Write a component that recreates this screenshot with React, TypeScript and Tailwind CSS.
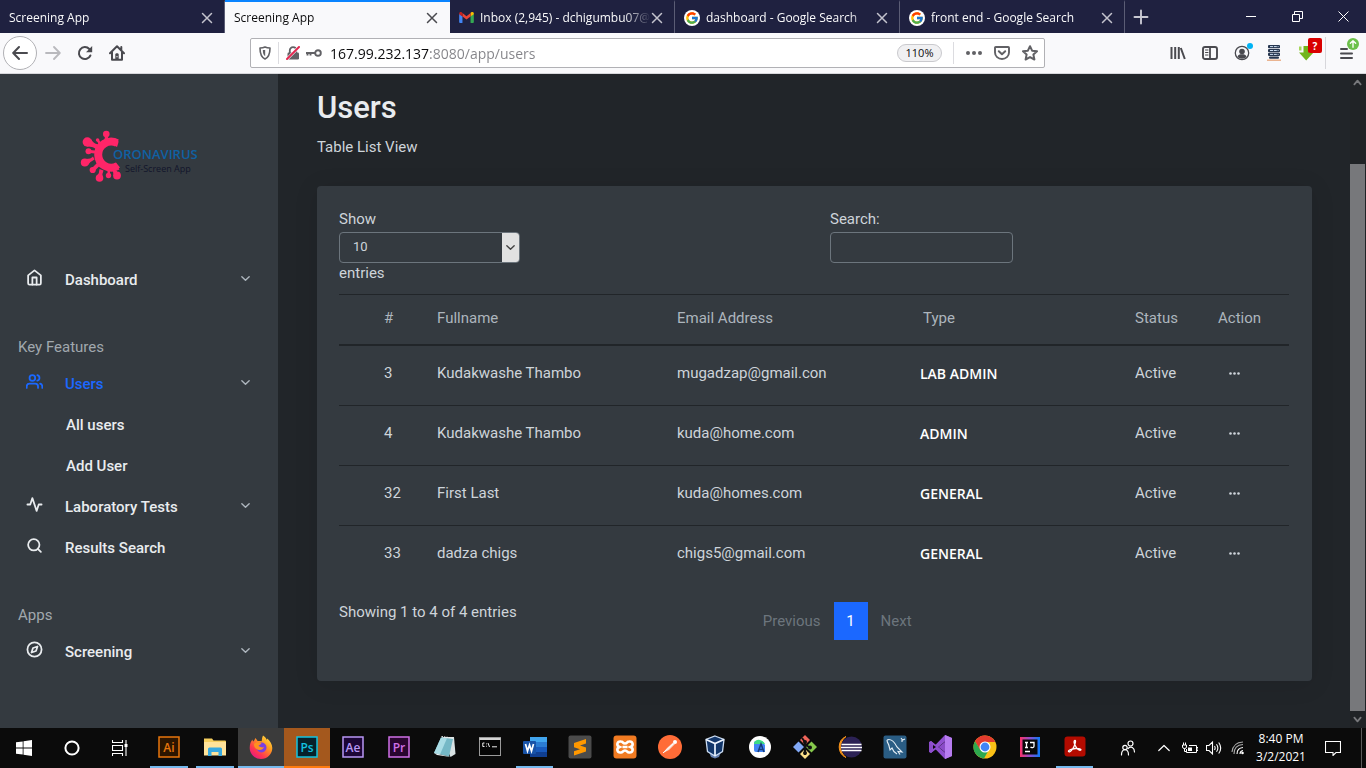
import React from "react";
import { FcGoogle } from "react-icons/fc";

type IconProps = { children: React.ReactNode; className?: string; box?: string; weight?: number };

function Stroke({ children, className = "size-4", box = "0 0 24 24", weight = 2 }: IconProps) {
  return (
    <svg viewBox={box} className={className} fill="none" stroke="currentColor" strokeWidth={weight} strokeLinecap="round" strokeLinejoin="round" aria-hidden="true">
      {children}
    </svg>
  );
}

function Art({ children, className = "size-6", box = "0 0 24 24" }: IconProps) {
  return (
    <svg viewBox={box} className={className} aria-hidden="true">
      {children}
    </svg>
  );
}

const Chevron = ({ className = "size-3" }: { className?: string }) => (
  <Stroke className={className} weight={3}>
    <path d="m4 8 8 8 8-8" />
  </Stroke>
);

/* ---------- Browser tabs ---------- */

const GmailIcon = () => (
  <Art className="h-[11px] w-[15px] shrink-0" box="0 0 16 12">
    <path d="M0 2v9a1 1 0 0 0 1 1h2.600V4.700z" fill="#4285f4" />
    <path d="M16 2v9a1 1 0 0 1-1 1h-2.600V4.700z" fill="#34a853" />
    <path d="M12.400 1.200V5L16 2.400V1.600C16 .2 14.300-.6 13 .4z" fill="#fbbc04" />
    <path d="M3.600 5V1.200L8 4.500l4.400-3.300V5L8 8.300z" fill="#ea4335" />
    <path d="M0 1.600v.8L3.600 5V1.200L3 .5C1.700-.5 0 .2 0 1.600z" fill="#c5221f" />
  </Art>
);

const GoogleBadge = () => (
  <span className="grid size-4 shrink-0 place-items-center rounded-full bg-white">
    <FcGoogle className="size-[14px]" />
  </span>
);

type TabInfo = { title: string; icon?: React.ReactNode; active?: boolean };

const tabs: TabInfo[] = [
  { title: "Screening App" },
  { title: "Screening App", active: true },
  { title: "Inbox (2,945) - dchigumbu07@", icon: <GmailIcon /> },
  { title: "dashboard - Google Search", icon: <GoogleBadge /> },
  { title: "front end - Google Search", icon: <GoogleBadge /> },
];

function Tab({ title, icon, active }: TabInfo) {
  return (
    <div
      className={
        active
          ? "flex w-[225px] items-center border-t-2 border-[#0a84ff] bg-[#f9f9fb] pr-3 pl-[9px] text-[#0c0c0d]"
          : "flex w-[225px] items-center border-t-2 border-r border-t-transparent border-r-[#5b5d75] pr-[11px] pl-[9px] text-[#f9f9fa]"
      }
    >
      <button className="flex min-w-0 flex-1 items-center gap-[6px] overflow-hidden text-left whitespace-nowrap [mask-image:linear-gradient(to_right,black_86%,transparent)]">
        {icon}
        <span>{title}</span>
      </button>
      <button aria-label={"Close " + title} className={active ? "text-[#4a4a4f]" : "text-[#c3c3cd]"}>
        <Stroke className="size-3" box="0 0 12 12">
          <path d="m1.500 1.500 9 9m0-9-9 9" strokeWidth="1.500" />
        </Stroke>
      </button>
    </div>
  );
}

function TabStrip() {
  return (
    <div className="flex h-[33px] shrink-0 bg-[#1f2140] font-['Open_Sans','Noto_Sans',sans-serif] text-[12px]">
      {tabs.map((t, i) => (
        <Tab key={i} {...t} />
      ))}
      <button aria-label="New tab" className="grid w-[32px] place-items-center text-[#c8c8d2]">
        <Stroke box="0 0 16 16" className="size-4">
          <path d="M8 1.500v13M1.500 8h13" strokeWidth="1.900" />
        </Stroke>
      </button>
      <div className="ml-auto flex text-white">
        <button aria-label="Minimize" className="grid w-[46px] place-items-center">
          <Art box="0 0 11 11" className="size-[11px]"><path d="M0 5.500h10" stroke="currentColor" /></Art>
        </button>
        <button aria-label="Restore" className="grid w-[46px] place-items-center">
          <Art box="0 0 11 11" className="size-[11px]"><path d="M.5 3.500h7v7h-7zM2.500 3V.5h8v7H8" stroke="currentColor" fill="none" /></Art>
        </button>
        <button aria-label="Close window" className="grid w-[46px] place-items-center">
          <Art box="0 0 11 11" className="size-[11px]"><path d="m.5.5 10 10m0-10-10 10" stroke="currentColor" /></Art>
        </button>
      </div>
    </div>
  );
}

/* ---------- Browser toolbar ---------- */

function Toolbar() {
  return (
    <div className="flex h-[41px] shrink-0 items-center border-b border-[#d7d7db] bg-[#f9f9fb] font-['Open_Sans','Noto_Sans',sans-serif] text-[#4a4a4f]">
      <div className="flex w-[250px] items-center pl-[3px]">
        <button aria-label="Back" className="grid size-[34px] place-items-center rounded-full border border-[#b1b1b5] bg-white">
          <Stroke box="0 0 16 16"><path d="M15 8H1.500M7 2 1.200 8 7 14" /></Stroke>
        </button>
        <button aria-label="Forward" className="grid size-8 place-items-center text-[#b9b9bd]">
          <Stroke box="0 0 16 16"><path d="M1 8h13.500M9 2l5.800 6L9 14" strokeWidth="1.800" /></Stroke>
        </button>
        <button aria-label="Reload" className="grid size-8 place-items-center">
          <Art box="0 0 16 16" className="size-4">
            <path d="M13.400 10.500A6 6 0 1 1 12.300 4" fill="none" stroke="currentColor" strokeWidth="2" strokeLinecap="round" />
            <path d="M15.200 1v6.200H9z" fill="currentColor" />
          </Art>
        </button>
        <button aria-label="Home" className="grid size-8 place-items-center">
          <Art box="0 0 16 16" className="size-4">
            <path d="M1 8.200 8 1.300l7 6.900M3 7v7.800h10V7M12.300 2v3" fill="none" stroke="currentColor" strokeWidth="2" strokeLinecap="round" strokeLinejoin="round" />
            <path d="M6.300 14V9.500c0-1.800 3.400-1.800 3.400 0V14z" fill="currentColor" />
            <path d="M8 11v1.300" stroke="#f9f9fb" strokeWidth="1" />
          </Art>
        </button>
      </div>

      <div className="flex h-[30px] min-w-0 flex-1 items-center rounded-[2px] border border-[#b1b1b5] bg-white text-[#616165]">
        <button aria-label="Tracking protection" className="grid h-[22px] w-7 place-items-center border-r border-[#dcdce0]">
          <Art box="0 0 14 14" className="size-[14px]">
            <path d="M7 1c2 1 4 1 5 1 0 5-.5 9-5 11C2.500 11 2 7 2 2c1 0 3 0 5-1z" fill="none" stroke="currentColor" strokeWidth="1.600" strokeLinejoin="round" />
            <path d="M7.200 4v6.200c-1.700-1.100-2.400-3-2.400-6.200z" fill="currentColor" />
          </Art>
        </button>
        <button aria-label="Connection not secure" className="ml-[7px]">
          <Art box="0 0 14 14" className="size-[14px]">
            <path d="M3.800 7V4.300a3.200 3.200 0 0 1 6.400 0V7" fill="none" stroke="currentColor" strokeWidth="1.800" />
            <rect x="1.500" y="6.500" width="11.500" height="7" rx="1.200" fill="currentColor" />
            <path d="M1 13 13 1" stroke="#fff" strokeWidth="3" />
            <path d="M1 13 13 1" stroke="#e22850" strokeWidth="2" strokeLinecap="round" />
          </Art>
        </button>
        <button aria-label="Saved login" className="ml-[6px]">
          <Art box="0 0 16 10" className="h-[10px] w-4">
            <circle cx="12" cy="5" r="2.800" fill="none" stroke="currentColor" strokeWidth="1.900" />
            <path d="M0 5h9M1.500 5v2.500M4.500 5v2.500" stroke="currentColor" strokeWidth="1.900" />
          </Art>
        </button>
        <input
          aria-label="Address"
          defaultValue="167.99.232.137:8080/app/users"
          className="ml-2 min-w-0 flex-1 bg-[linear-gradient(to_right,#0c0c0d_99px,#838388_99px)] bg-clip-text pt-[2px] text-[14px] leading-5 text-transparent outline-none"
        />
        <button className="h-[18px] w-[45px] rounded-full border border-[#c9c9cd] bg-[#f0f0f2] text-[11px] leading-4 text-[#0c0c0d]">110%</button>
        <span className="ml-[11px] h-[22px] w-px bg-[#dcdce0]" />
        <button aria-label="Page actions" className="ml-3 grid w-4 place-items-center">
          <Art box="0 0 16 16" className="size-4"><g fill="currentColor"><circle cx="2" cy="8" r="2" /><circle cx="8" cy="8" r="2" /><circle cx="14" cy="8" r="2" /></g></Art>
        </button>
        <button aria-label="Save to Pocket" className="ml-3">
          <Stroke box="0 0 16 16"><path d="M1.800 2h12.400q.8 0 .8.800V7.500a7 6.500 0 0 1-14 0V2.800Q1 2 1.800 2z" strokeWidth="1.900" /><path d="m4.800 6.200 3.200 3 3.200-3" /></Stroke>
        </button>
        <button aria-label="Bookmark" className="mr-[6px] ml-3">
          <Stroke box="0 0 16 16"><path d="m8 1.200 2.100 4.500 4.900.6-3.600 3.300 1 4.900L8 12.100l-4.400 2.400 1-4.900L1 6.300l4.900-.6z" /></Stroke>
        </button>
      </div>

      <div className="flex items-center self-stretch pl-[117px]">
        <button aria-label="Library" className="grid w-8 place-items-center">
          <Stroke box="0 0 16 16"><path d="M1.500 2v12M5.200 2v12M8.800 2v12M10.800 3l4 11" strokeLinecap="butt" /></Stroke>
        </button>
        <button aria-label="Sidebars" className="grid w-8 place-items-center">
          <Stroke box="0 0 16 16"><rect x="1" y="2" width="14" height="12" rx="2" strokeWidth="1.900" /><path d="M8 2v12" strokeWidth="1.800" /><path d="M3.500 5H6M3.500 7.500H6M3.500 10H6" strokeWidth="1" /></Stroke>
        </button>
        <button aria-label="Account" className="relative grid w-8 place-items-center">
          <Art box="0 0 16 16" className="size-4">
            <circle cx="8" cy="8" r="6.700" fill="none" stroke="currentColor" strokeWidth="1.300" />
            <circle cx="8" cy="6.500" r="2.800" fill="currentColor" />
            <path d="M3.500 12c.6-2.200 2-2.700 4.500-2.700s3.900.5 4.500 2.700A6.500 6.500 0 0 1 8 13.800 6.500 6.500 0 0 1 3.500 12z" fill="currentColor" />
          </Art>
          <span className="absolute -top-[2px] right-[5px] size-[6px] rounded-full bg-[#00b3f4]" />
        </button>
        <button aria-label="Server extension" className="grid w-8 place-items-center">
          <Art box="0 0 16 16" className="size-4">
            <g fill="#26364f"><rect x="2" y="0" width="12" height="3.300" rx="1" /><rect x="2" y="3.900" width="12" height="3.300" rx="1" /><rect x="2" y="7.800" width="12" height="3.300" rx="1" /><rect x="3" y="11.600" width="10" height="2.200" rx="1" /></g>
            <path d="M4 1.600h8.500M4 5.500h8.500M4 9.400h8.500" stroke="#cfe0f4" strokeWidth="1" strokeDasharray="3 .8" />
            <path d="M1 15.200h14" stroke="#e8a87c" strokeWidth="1.300" />
          </Art>
        </button>
        <button aria-label="Download helper" className="relative grid w-8 place-items-center">
          <Art box="0 0 16 16" className="size-4">
            <path d="M5.500 1h5.500v6.500h4.500L8.200 15.500 1 7.500h4.500z" fill="#72b51b" />
            <path d="M1 1.500h2.500v4H1z" fill="#a6d65a" />
          </Art>
          <span className="absolute -top-[7px] right-0 grid h-[15px] w-[14px] place-items-center rounded-[2px] bg-[#d90000] text-[10px] leading-none font-bold text-white">?</span>
        </button>
        <span className="ml-[3px] h-8 w-px bg-[#d7d7db]" />
        <button aria-label="Menu" className="relative grid w-10 place-items-center">
          <Stroke box="0 0 16 16"><path d="M3 4h6M3 8.500h11M3 13h11" /></Stroke>
          <span className="absolute -top-[7px] right-[7px] grid size-3 place-items-center rounded-full bg-[#6cc04a] text-white">
            <Stroke box="0 0 12 12" className="size-[10px]"><path d="M6 10V2M2.800 5.200 6 2l3.200 3.200" strokeWidth="1.600" /></Stroke>
          </span>
        </button>
      </div>
    </div>
  );
}

/* ---------- Sidebar ---------- */

const AppLogo = () => (
  <svg viewBox="0 0 120 54" className="h-[54px] w-[120px]" role="img" aria-label="Coronavirus Self-Screen App">
    <path d="M37 13A13 13 0 1 0 37.500 36" fill="none" stroke="#ff2568" strokeWidth="8" />
    <path d="M35 8.500q4.500 1 3.300 4.500l-1.300 4-5-3zM36 32.500l4 5-6 4-4-3z" fill="#ff2568" />
    <g fill="#ff2568">
      <circle cx="26.300" cy="4" r="3.300" /><path d="m25 6-.6 4h4.600L27.500 6z" />
      <circle cx="7.300" cy="12" r="4.700" /><path d="M11 9q3 6 8 5l-3 5q-3-3-9-2.500z" />
      <circle cx="17.600" cy="10" r="1.800" /><path d="m17 11 2 4 2-2-2-3z" />
      <circle cx="8.500" cy="21.300" r="3" /><path d="m10 20 5 .5v3l-5-.5z" />
      <circle cx="4.800" cy="32.500" r="4" /><path d="M6 29q5 0 7-2.500l1.500 3Q11 31 8 35z" />
      <circle cx="12.700" cy="40" r="3.100" /><path d="m12 38 5-5 2.500 3-5 5z" />
      <circle cx="19.500" cy="48" r="3.800" /><path d="M17 46q2.500-3 2.500-7l4 1.500q-1.500 3-1 7z" />
      <circle cx="28.500" cy="45.500" r="2.700" /><path d="M27.500 40H30v4h-2.500z" />
      <circle cx="37" cy="45.500" r="3.900" /><path d="m32 39 5 2v3l-3 1z" />
    </g>
    <text x="33" y="29" fontSize="13" fontWeight="600" fill="#0f61a3" fontFamily="'Open Sans', 'Noto Sans', sans-serif">ORONAVIRUS</text>
    <text x="45" y="42" fontSize="9" fill="#12152b" fontFamily="'Open Sans', 'Noto Sans', sans-serif">Self-Screen App</text>
  </svg>
);

type NavProps = { label: string; icon: React.ReactNode; expandable?: boolean; active?: boolean };

function NavItem({ label, icon, expandable, active }: NavProps) {
  return (
    <a href="#" className={active ? "flex h-[41px] items-center pr-[27px] pl-[26px] text-[#1b68ff]" : "flex h-[41px] items-center pr-[27px] pl-[26px] text-[#e9ecef]"}>
      <Stroke className="mb-[6px] size-[17px]" weight={2.5}>{icon}</Stroke>
      <span className="ml-[22px] flex-1 font-medium">{label}</span>
      {expandable && <span className="mb-[5px] text-[#adb5bd]"><Chevron className="size-[11px]" /></span>}
    </a>
  );
}

function SubItem({ label }: { label: string }) {
  return <a href="#" className="flex h-[41px] items-center pl-[66px] font-medium text-[#e9ecef]">{label}</a>;
}

function NavHeading({ children }: { children: React.ReactNode }) {
  return <p className="mt-9 mb-[6px] pl-[18px] text-[#a1a8ae]">{children}</p>;
}

function Sidebar() {
  return (
    <aside className="w-[278px] shrink-0 bg-[#343a40]">
      <a href="#" className="block h-[186px] pt-14 pl-20"><AppLogo /></a>
      <nav>
        <NavItem label="Dashboard" expandable icon={<><path d="m3 9 9-7 9 7v11a2 2 0 0 1-2 2H5a2 2 0 0 1-2-2z" /><path d="M9 22V12h6v10" /></>} />
        <NavHeading>Key Features</NavHeading>
        <NavItem label="Users" expandable active icon={<><path d="M17 21v-2a4 4 0 0 0-4-4H5a4 4 0 0 0-4 4v2" /><circle cx="9" cy="7" r="4" /><path d="M23 21v-2a4 4 0 0 0-3-3.870M16 3.130a4 4 0 0 1 0 7.750" /></>} />
        <SubItem label="All users" />
        <SubItem label="Add User" />
        <NavItem label="Laboratory Tests" expandable icon={<path d="M22 12h-4l-3 9L9 3l-3 9H2" />} />
        <NavItem label="Results Search" icon={<><circle cx="11" cy="11" r="8" /><path d="m21 21-4.350-4.350" /></>} />
        <NavHeading>Apps</NavHeading>
        <NavItem label="Screening" expandable icon={<><circle cx="12" cy="12" r="10" /><path d="m16.240 7.760-2.120 6.360-6.360 2.120 2.120-6.360z" /></>} />
      </nav>
    </aside>
  );
}

/* ---------- Users page ---------- */

const users = [
  { id: 3, name: "Kudakwashe Thambo", email: "mugadzap@gmail.con", type: "LAB ADMIN" },
  { id: 4, name: "Kudakwashe Thambo", email: "kuda@home.com", type: "ADMIN" },
  { id: 32, name: "First Last", email: "kuda@homes.com", type: "GENERAL" },
  { id: 33, name: "dadza chigs", email: "chigs5@gmail.com", type: "GENERAL" },
];

const headings = ["", "#", "Fullname", "Email Address", "Type", "Status", "Action"];

function UsersTable() {
  return (
    <table className="mt-[10px] w-full table-fixed border-separate border-spacing-0 text-left">
      <colgroup>
        <col className="w-[32px]" />
        <col className="w-[53px]" />
        <col className="w-[240px]" />
        <col className="w-[246px]" />
        <col className="w-[212px]" />
        <col className="w-[83px]" />
        <col className="w-[84px]" />
      </colgroup>
      <thead>
        <tr>
          {headings.map((h, i) => (
            <th key={i} className="border-t border-b-2 border-[#212529] px-[13px] pt-[13px] pb-[15px] font-normal text-[#adb5bd]">{h}</th>
          ))}
        </tr>
      </thead>
      <tbody className="[&_td]:h-[60px] [&_td]:border-b [&_td]:border-[#212529] [&_td]:px-[13px] [&_td]:pb-1 [&_tr:last-child_td]:border-transparent">
        {users.map((u) => (
          <tr key={u.id}>
            <td />
            <td>{u.id}</td>
            <td>{u.name}</td>
            <td>{u.email}</td>
            <td><span className="-ml-[3px] block font-['Open_Sans','Noto_Sans',sans-serif] text-[14px] font-semibold text-white">{u.type}</span></td>
            <td>Active</td>
            <td>
              <button aria-label={"Actions for user " + u.id} className="ml-[11px] block">
                <Art box="0 0 11 3" className="h-[3px] w-[11px]"><g fill="#ced4da"><circle cx="1.500" cy="1.500" r="1.300" /><circle cx="5.500" cy="1.500" r="1.300" /><circle cx="9.500" cy="1.500" r="1.300" /></g></Art>
              </button>
            </td>
          </tr>
        ))}
      </tbody>
    </table>
  );
}

function UsersPage() {
  return (
    <main className="min-w-0 flex-1 overflow-hidden bg-[#212529] px-[38px] pt-4 pl-[39px] text-[#ced4da]">
      <h1 className="text-[31px] leading-9 font-medium text-[#e9ecef]">Users</h1>
      <p className="mt-[11px]">Table List View</p>
      <section className="mt-7 rounded-[4px] bg-[#343a40] pt-[23px] pr-[23px] pb-[41px] pl-[22px] shadow-[0_3px_24px_rgba(0,0,0,0.1)]">
        <div className="grid grid-cols-2 gap-8">
          <div>
            <label htmlFor="page-size" className="mb-[2px] block">Show</label>
            <div className="flex h-[31px] w-[181px] overflow-hidden rounded-[4px] border border-[#6c757d]">
              <select id="page-size" defaultValue="10" className="min-w-0 flex-1 appearance-none bg-transparent pb-[2px] pl-[13px] text-[13px] text-[#ced4da] outline-none">
                <option>10</option>
                <option>25</option>
                <option>50</option>
              </select>
              <span className="pointer-events-none grid w-[17px] place-items-center bg-[#e1e1e1] text-[#444]"><Chevron className="size-[11px]" /></span>
            </div>
            <span className="block">entries</span>
          </div>
          <div>
            <label htmlFor="search" className="mb-[2px] block">Search:</label>
            <input id="search" type="search" className="block h-[31px] w-[183px] rounded-[4px] border border-[#6c757d] bg-transparent px-3 text-[13px] outline-none" />
          </div>
        </div>
        <UsersTable />
        <div className="mt-4 grid grid-cols-12">
          <p className="col-span-5">Showing 1 to 4 of 4 entries</p>
          <nav aria-label="Pages" className="col-span-7 flex h-[38px] pl-[15px] text-[#6c757d]">
            <button className="px-[13px]">Previous</button>
            <button className="w-[34px] bg-[#1b68ff] text-white">1</button>
            <button className="px-[13px]">Next</button>
          </nav>
        </div>
      </section>
    </main>
  );
}

function PageScrollbar() {
  return (
    <div className="flex w-4 shrink-0 flex-col bg-[#202326] text-[#77787b]">
      <span className="grid h-[17px] w-[15px] place-items-center"><Stroke box="0 0 10 10" className="size-[9px]"><path d="m1.500 7 3.500-4 3.500 4" /></Stroke></span>
      <span className="h-[73px]" />
      <span className="w-[15px] flex-1 bg-[#77787b]" />
      <span className="grid h-[17px] w-[15px] place-items-center"><Stroke box="0 0 10 10" className="size-[9px]"><path d="m1.500 3 3.500 4 3.500-4" /></Stroke></span>
    </div>
  );
}

/* ---------- Taskbar ---------- */

function Adobe({ text, color, fill }: { text: string; color: string; fill: string }) {
  return (
    <Art className="size-[22px]" box="0 0 22 22">
      <rect x="1" y="1" width="20" height="20" fill={fill} stroke={color} strokeWidth="1.500" />
      <text x="11" y="15.500" fontSize="12" textAnchor="middle" fill={color} fontFamily="'Open Sans', sans-serif" fontWeight="600">{text}</text>
    </Art>
  );
}

type AppEntry = { name: string; icon: React.ReactNode; state?: "open" | "focused" | "alert" };

const apps: AppEntry[] = [
  { name: "Illustrator", state: "open", icon: <Adobe text="Ai" color="#e8760c" fill="#2c1500" /> },
  {
    name: "File Explorer", state: "open",
    icon: <Art><path d="M1 3.500h8l1.500 2H22q1 0 1 1V20H1z" fill="#f6cf5f" /><path d="M1 7h22v13.500H1z" fill="#ffe39a" /><path d="M5 21v-7q0-1.500 1.500-1.500h11Q19 12.500 19 14v7h-3.500v-4h-7v4z" fill="#37a9e0" /></Art>,
  },
  {
    name: "Firefox", state: "focused",
    icon: (
      <Art>
        <defs><linearGradient id="fx" x1="1" y1="0" x2=".2" y2="1"><stop offset="0" stopColor="#fff44f" /><stop offset=".4" stopColor="#ff9a1f" /><stop offset=".75" stopColor="#ff3750" /><stop offset="1" stopColor="#e31587" /></linearGradient></defs>
        <path d="M14 .5c2 1 3 3 4 4.500 0-.6 0-1 .3-1.500C21 6 23.300 9 23.300 13A11.300 11 0 0 1 .7 13C.7 9 2 6 3.500 4.500c0 1 .3 1.700.7 2C5.500 5.500 6 4 6.200 3c1 .8 2 2 2.300 3 2 0 3-.1 4.200.3.3-2 .3-4 1.300-5.800z" fill="url(#fx)" />
        <circle cx="12.500" cy="12.500" r="5" fill="#7b3fe0" />
        <path d="M5 9c2-2 4-2.200 7.500-1-1 2-3 2-3 3 2 1 3.500 2 5.500 1-1 3-5 4-7.500 2S5 11 5 9z" fill="#ff9020" />
      </Art>
    ),
  },
  { name: "Photoshop", state: "alert", icon: <Adobe text="Ps" color="#12c2e0" fill="#07212b" /> },
  { name: "After Effects", icon: <Adobe text="Ae" color="#b897f5" fill="#1c0536" /> },
  { name: "Premiere Pro", icon: <Adobe text="Pr" color="#d070e8" fill="#29052f" /> },
  {
    name: "Notepad",
    icon: <Art><path d="M9 2h12l1.500 17-5 3z" fill="#d9e2e4" /><path d="M8 2.500 20 4l-4 17.500L1 18z" fill="#75b8c6" /><path d="m8 2.500 6 .8L7 19.500 1 18z" fill="#a9dce5" /><path d="m1 18 15 3.500 1.500.5L4 20z" fill="#e8eef0" /><path d="M8.500 1.500 20 3" stroke="#eee" strokeDasharray="1.500 1" /></Art>,
  },
  {
    name: "Command Prompt",
    icon: <Art><rect x="1.500" y="2.500" width="21" height="18" fill="#050505" stroke="#9a9a9a" /><path d="M1.500 3h21v2h-21z" fill="#d4d4d4" /><path d="M6.500 8H4.800v3.500h1.700M8.500 8.500v.8m0 1.500v.8M10 8l1.500 4m2.500-.2h5" stroke="#eee" fill="none" /></Art>,
  },
  {
    name: "Word", state: "open",
    icon: <Art><path d="M7 2h17v5H7z" fill="#41a5ee" /><path d="M7 7h17v5H7z" fill="#2b7cd3" /><path d="M7 12h17v5H7z" fill="#185abd" /><path d="M7 17h17v5H7z" fill="#103f91" /><rect y="6" width="13" height="13" rx="1" fill="#1853a8" /><path d="m2.500 9 2 7 2-6 2 6 2-7" fill="none" stroke="#fff" strokeWidth="1.700" /></Art>,
  },
  {
    name: "Sublime Text",
    icon: <Art><rect x=".5" y=".5" width="23" height="23" rx="2" fill="#4b4b4b" /><path d="m6 8 12-4v4.500l-6 2 6 2v4L6 20.500v-4.300l6-2-6-2z" fill="#ff9800" /></Art>,
  },
  {
    name: "XAMPP",
    icon: <Art><rect x=".5" y=".5" width="23" height="23" rx="3" fill="#f17b22" /><path d="M8 6.500c-4-.5-5 4-1.500 5.500-3.500 1.500-2.500 6 1.500 5.500 2 0 1.500-2 4-2s2 2 4 2c4 .5 5-4 1.500-5.500C21 10.500 20 6 16 6.500c-2 0-1.500 2-4 2s-2-2-4-2z" fill="none" stroke="#fff" strokeWidth="2.600" /><path d="M9.500 12h5" stroke="#fff" strokeWidth="2.500" /></Art>,
  },
  {
    name: "Postman",
    icon: <Art><circle cx="12" cy="12" r="12" fill="#ff6c37" /><path d="m5 18 4-5 6-5.500 2 1.500-6 6z" fill="#fbd9ca" /><circle cx="17" cy="7" r="2" fill="#fff" /><path d="m5 18 10-9" stroke="#fff" /></Art>,
  },
  {
    name: "VirtualBox",
    icon: <Art><path d="m12 16 6 1-2 5-4 1.500L8 22l-2-5z" fill="#6580b0" /><path d="m12 1 9 3.500-1.500 12L12 21l-7.500-4.500L3 4.500z" fill="#12366a" stroke="#cbdcf2" strokeWidth="1.300" /><path d="m3 4.500 9 4 9-4M12 8.500V21" stroke="#eef5ff" strokeWidth="1.700" fill="none" /></Art>,
  },
  {
    name: "Android Studio",
    icon: <Art><circle cx="12" cy="12" r="11" fill="#fff" /><path d="M6 8q0-2 2-2h6l3 4v7H8q-2 0-2-2z" fill="#4285f4" /><path d="M6 8q2-4 6-3 4 1 5 4H6z" fill="#3ddc84" /><path d="m10 17 3-8 3 8m-5-2.500h4" stroke="#163b78" strokeWidth="1.500" fill="none" /></Art>,
  },
  {
    name: "Git",
    icon: <Art><path d="m12 0 5 5-5 5-5-5z" fill="#f0655a" /><path d="m5.500 6.500 5.500 5.500-5.500 5.500L0 12z" fill="#82a9f7" /><path d="m18.500 6.500 5.500 5.500-5.500 5.500L13 12z" fill="#86c94c" /><path d="m12 14 5 5-5 5-5-5z" fill="#fce08a" /><path d="M9 3 12 7v13M12 9l5 4" stroke="#111" strokeWidth="2" fill="none" /><g fill="#111"><circle cx="12" cy="7" r="2" /><circle cx="17" cy="12.500" r="2" /><circle cx="12" cy="18" r="2" /></g></Art>,
  },
  {
    name: "Eclipse",
    icon: <Art><path d="M8 1.500a11.500 11.500 0 0 0 0 21 13 13 0 0 1 0-21z" fill="#f79219" stroke="#f79219" /><circle cx="13.500" cy="12" r="10.500" fill="#2c2255" /><path d="M3.500 9.500h20M3 12.500h21M3.500 15.500h20" stroke="#fff" strokeWidth="1.500" /></Art>,
  },
  {
    name: "MySQL Workbench",
    icon: <Art><rect x=".5" y=".5" width="23" height="23" rx="2" fill="#2a5d84" /><path d="M4 5c4-2 8 3 10 7l5 5-4-.5 2 3M4 5c0 3 2 4 2 6l1 4 2-2c1 3 3 5 5 6M18 3l1.500 2L22 4m-3 1v2" fill="none" stroke="#e6eff6" strokeWidth="1.100" /></Art>,
  },
  {
    name: "Visual Studio",
    icon: <Art><path d="M1 7 3 6l15 12V6L3 18l-2-1z" fill="#8a4bc7" /><path d="m17 0 7 3v18l-7 3L1 7.500 3 6l14 11.500V6.500L3 18l-2-1.500z" fill="#8f4fcf" /><path d="m17 0 7 3v18l-7 3z" fill="#b77cf0" /><path d="m5 10 3 2-3 2z" fill="#0b0b0b" /></Art>,
  },
  {
    name: "Chrome",
    icon: <Art><circle cx="12" cy="12" r="11.500" fill="#fbc116" /><path d="M12 .5A11.500 11.500 0 0 0 2 6.200L7 15l5-8h10.300A11.500 11.500 0 0 0 12 .5z" fill="#e33b2e" /><path d="M2 6.200a11.500 11.500 0 0 0 9 17.300l5-9-4 2.500-5-2.500z" fill="#2da94f" /><circle cx="12" cy="12" r="5.500" fill="#fff" /><circle cx="12" cy="12" r="4.400" fill="#4285f4" /></Art>,
  },
  {
    name: "IntelliJ IDEA",
    icon: <Art><defs><linearGradient id="ij"><stop offset="0" stopColor="#fc3168" /><stop offset=".5" stopColor="#8b4fd0" /><stop offset="1" stopColor="#087cfa" /></linearGradient></defs><rect x="2" y="2" width="20" height="20" fill="url(#ij)" /><rect x="4.500" y="4.500" width="15" height="15" fill="#080808" /><path d="M7 7.500h3M8.500 7.500v5M7 12.500h3M12 7.500h4v3.700c0 1.500-2.500 1.800-3.500.8M7 16.500h5" stroke="#fff" fill="none" strokeWidth="1.300" /></Art>,
  },
  {
    name: "Acrobat Reader", state: "open",
    icon: <Art><rect x="1.500" y="1.500" width="21" height="20" rx="3" fill="#b30b00" /><path d="M12 5.500c-1.500 0-1 3 .5 5.500 1.500 2.800 3.500 4.500 5 4.200 1.500-.5-.5-2.200-5-1.700-4.500.4-7.500 2-7 3 1 1.500 4-1.500 5.500-5 1.500-3.300 2-6 1-6z" fill="none" stroke="#fff" strokeWidth="1.300" /></Art>,
  },
];

function TaskButton({ app, wide }: { app: AppEntry; wide: boolean }) {
  const bg = app.state === "focused" ? "bg-[#3b3b3b]" : app.state === "alert" ? "bg-[#a4581d]" : "";
  return (
    <button aria-label={app.name} className={`relative grid place-items-center pb-[2px] ${wide ? "w-[46px]" : "w-[45px]"} ${bg}`}>
      {app.icon}
      {app.state === "open" && <span className="absolute inset-x-1 bottom-0 h-[2px] bg-[#76b9ed]" />}
      {app.state === "focused" && <span className="absolute inset-x-0 bottom-0 h-[2px] bg-[#76b9ed]" />}
      {app.state === "alert" && <span className="absolute inset-x-0 bottom-0 h-[2px] bg-[#ff7b0f]" />}
    </button>
  );
}

function Taskbar() {
  return (
    <footer className="flex h-10 shrink-0 bg-[#0b0b0b] font-['Open_Sans','Noto_Sans',sans-serif] text-[12px] text-white">
      <div className="flex w-[146px] shrink-0">
        <button aria-label="Start" className="grid w-12 place-items-center">
          <Art className="size-4" box="0 0 16 16"><path d="M0 2.300 6.700 1.400v6.200H0zM7.500 1.300 16 0v7.600H7.500zM0 8.400h6.700v6.200L0 13.700zM7.500 8.400H16V16l-8.500-1.300z" fill="#fff" /></Art>
        </button>
        <button aria-label="Cortana" className="grid w-12 place-items-center">
          <Art className="size-4" box="0 0 16 16"><circle cx="8" cy="8" r="6.600" fill="none" stroke="#fff" strokeWidth="2" /></Art>
        </button>
        <button aria-label="Task view" className="grid w-12 place-items-center">
          <Art className="size-4" box="0 0 16 16"><path d="M.5 0v2.500h10V0M.5 16v-2.500h10V16M.5 5.500h10v5H.5zM14 0v16" fill="none" stroke="#fff" strokeWidth="1.100" /><path d="M12.500 4h3v3h-3z" fill="#fff" /></Art>
        </button>
      </div>
      {apps.map((a, i) => (
        <TaskButton key={a.name} app={a} wide={i < 6} />
      ))}
      <div className="ml-auto flex shrink-0">
        <button aria-label="People" className="grid w-11 place-items-center">
          <Stroke className="size-4" box="0 0 16 16"><g strokeWidth="1.200"><circle cx="10.500" cy="3.500" r="2.500" /><circle cx="5" cy="7.500" r="2.200" /><path d="M1.500 15c0-7 7-7 7 0M8 8.500c3-3 6.500-1 6.500 3.500" /></g></Stroke>
        </button>
        <button aria-label="Show hidden icons" className="grid w-7 place-items-center">
          <Stroke className="size-3" box="0 0 12 12"><path d="m.8 8.500 5.200-5 5.200 5" strokeWidth="1.200" /></Stroke>
        </button>
        <button aria-label="Battery" className="grid w-6 place-items-center">
          <Art className="size-4" box="0 0 16 16"><path d="M7 5.500h7.500v7H4.500V9M14.500 7.500H16v3h-1.500M.5 5h4v2q0 1.500-2 1.500T.5 7zM1.500 5V2.500m2 2.500V2.500M2.500 8.500v3H4" fill="none" stroke="#fff" /><path d="M6 7.500h4v3.500H6z" fill="#fff" /></Art>
        </button>
        <button aria-label="Volume" className="grid w-6 place-items-center">
          <Art className="size-4" box="0 0 16 16"><path d="M.5 5.500h2.500L6.500 2v12L3 10.500H.5zM8.500 6q1.300 2 0 4M10.500 4.200q2.700 3.800 0 7.600M12.700 2.500q4 5.500 0 11" fill="none" stroke="#fff" strokeWidth="1.100" /></Art>
        </button>
        <button aria-label="Network" className="grid w-6 place-items-center">
          <Art className="size-4" box="0 0 16 16"><g fill="none" stroke="#fff" strokeWidth="1.100"><path d="M10 14q0-3 3-3.500M7 14q0-6 6-6.500" /><path d="M4 14q0-9 9-9.500M2 12Q3 2.500 13 2" stroke="#a8a8a8" /></g><circle cx="12.500" cy="13" r="1.300" fill="#fff" /></Art>
        </button>
        <button className="w-[62px] text-center leading-[18px]">
          <span className="block">8:40 PM</span>
          <span className="block">3/2/2021</span>
        </button>
        <button aria-label="Notifications" className="grid w-[42px] place-items-center">
          <Art className="size-4" box="0 0 16 16"><path d="M.5 1.500h15v11H11l-3 3v-3H.5z" fill="none" stroke="#fff" strokeWidth="1.100" /></Art>
        </button>
        <button aria-label="Show desktop" className="ml-[7px] w-[5px] border-l border-[#5a5a5a]" />
      </div>
    </footer>
  );
}

export default function App() {
  return (
    <div className="flex h-screen flex-col overflow-hidden">
      <header>
        <TabStrip />
        <Toolbar />
      </header>
      <div className="flex min-h-0 flex-1 overflow-hidden font-['Roboto','Open_Sans',sans-serif] text-[15px] leading-[21px]">
        <Sidebar />
        <UsersPage />
        <PageScrollbar />
      </div>
      <Taskbar />
    </div>
  );
}
